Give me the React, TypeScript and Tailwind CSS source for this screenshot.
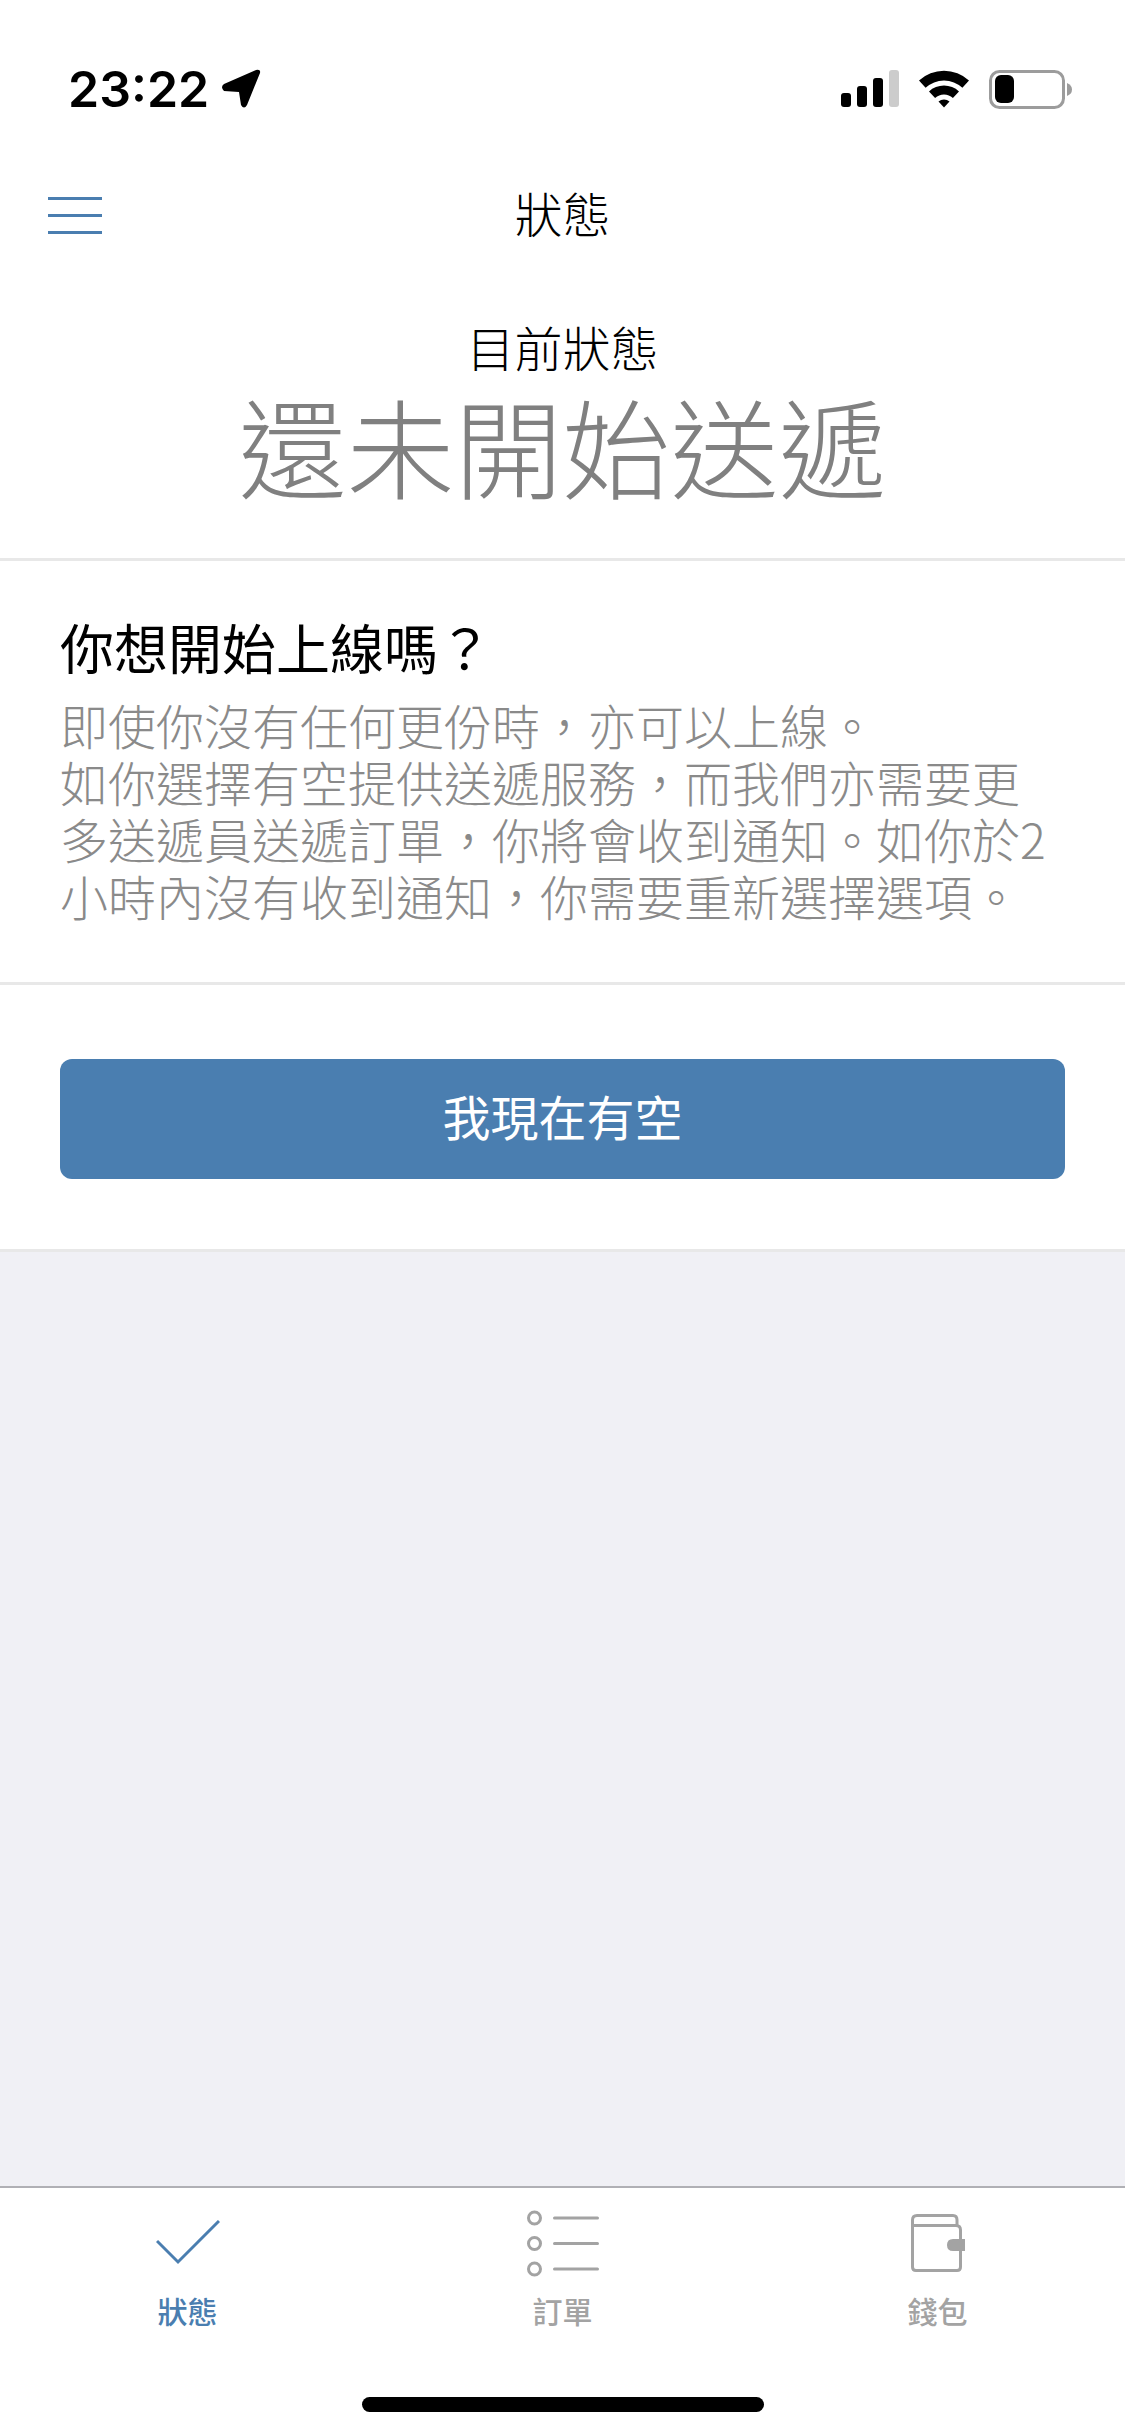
import React from "react"

const cjk = "font-['Noto_Sans_CJK_TC','Noto_Sans_CJK_SC',sans-serif]"

const StatusBar = () => (
  <div className="flex h-[150px] items-start justify-between pl-[68px] pr-[53px] pt-[58px]">
    <div className="flex items-center">
      <span className="font-['Inter',sans-serif] text-[50px] font-semibold leading-[62px] text-black">23:22</span>
      <svg width="40" height="40" viewBox="0 0 40 40" className="ml-[12px]">
        <path d="M3 15 L35 1 Q40 0 39 4 L26 36 Q23 41 20 36 L18 23 L3 22 Q-1 18 3 15 Z" fill="#000" />
      </svg>
    </div>
    <div className="mt-[12px] flex items-start gap-[20px]">
      <svg width="58" height="38" viewBox="0 0 58 38">
        <rect x="0" y="23" width="10" height="14" rx="3" fill="#000" />
        <rect x="16" y="16" width="10" height="21" rx="3" fill="#000" />
        <rect x="32" y="8" width="10" height="29" rx="3" fill="#000" />
        <rect x="48" y="0" width="10" height="37" rx="3" fill="#cccccc" />
      </svg>
      <svg width="50" height="38" viewBox="0 0 50 38">
        <path d="M0 10.5 A37 37 0 0 1 50 10.5 L43.4 17.8 A27 27 0 0 0 6.6 17.8 Z" fill="#000" />
        <path d="M10 21.4 A22 22 0 0 1 40 21.4 L33.9 28 A13 13 0 0 0 16.1 28 Z" fill="#000" />
        <path d="M19.5 31.6 A8 8 0 0 1 30.5 31.6 L25 37.5 Z" fill="#000" />
      </svg>
      <svg width="83" height="39" viewBox="0 0 83 39">
        <rect x="1.5" y="1.5" width="73" height="36" rx="9" fill="none" stroke="#9c9c9c" stroke-width="3" />
        <rect x="6" y="5" width="19" height="28" rx="6" fill="#000" />
        <path d="M78 13 Q83 15 83 19.5 Q83 24 78 26 Z" fill="#9c9c9c" />
      </svg>
    </div>
  </div>
)

const NavBar = () => (
  <div className="relative flex h-[130px] items-center justify-center">
    <button className="absolute left-[48px] top-[47px] flex w-[54px] flex-col gap-[14px]">
      <span className="h-[3px] w-full bg-[#4a7eb0]" />
      <span className="h-[3px] w-full bg-[#4a7eb0]" />
      <span className="h-[3px] w-full bg-[#4a7eb0]" />
    </button>
    <span className="-mt-[6px] text-[48px] font-light leading-[60px] text-black">狀態</span>
  </div>
)

const Tab = ({ icon, label, active }: { icon: React.ReactNode; label: string; active?: boolean }) => (
  <div className="flex flex-1 flex-col items-center">
    <div className="flex h-[96px] items-center justify-center">{icon}</div>
    <span className={`-mt-[1px] text-[30px] font-medium leading-[40px] ${active ? "text-[#4a7eb0]" : "text-[#a3a3a3]"}`}>{label}</span>
  </div>
)

export default function App() {
  return (
    <div className={`flex h-[2436px] w-[1125px] flex-col bg-[#f0f0f5] ${cjk}`}>
      <div className="bg-white">
        <StatusBar />
        <NavBar />
        <div className="flex h-[281px] flex-col items-center border-b-[3px] border-[#e8e8e8] pt-[36px]">
          <span className="text-[48px] font-light leading-[60px] text-black">目前狀態</span>
          <span className="mt-[8px] text-[108px] font-light leading-[120px] text-[#808080]">還未開始送遞</span>
        </div>
        <div className="h-[424px] border-b-[3px] border-[#e8e8e8] px-[60px] pt-[52px]">
          <h1 className="text-[54px] font-normal leading-[68px] text-black">你想開始上線嗎？</h1>
          <p className="mt-[15px] text-[48px] font-light leading-[57px] text-[#8a8a8a]">
            即使你沒有任何更份時，亦可以上線。
            <br />
            如你選擇有空提供送遞服務，而我們亦需要更多送遞員送遞訂單，你將會收到通知。如你於2小時內沒有收到通知，你需要重新選擇選項。
          </p>
        </div>
        <div className="border-b-[3px] border-[#e8e8e8] px-[60px] pb-[70px] pt-[74px]">
          <button className="flex h-[120px] w-full items-center justify-center rounded-[12px] bg-[#4a7eb0] pb-[9px] text-[48px] leading-[60px] text-white">
            我現在有空
          </button>
        </div>
      </div>
      <div className="flex-1" />
      <div className="relative h-[250px] border-t-[2px] border-[#b0b0b5] bg-white">
        <div className="flex pt-[7px]">
          <Tab
            active
            label="狀態"
            icon={
              <svg width="64" height="46" viewBox="0 0 64 46">
                <path d="M1 21 L22 42 L63 1" fill="none" stroke="#4a7eb0" stroke-width="3" />
              </svg>
            }
          />
          <Tab
            label="訂單"
            icon={
              <svg width="72" height="67" viewBox="0 0 72 67">
                <circle cx="7.5" cy="8" r="6" fill="none" stroke="#a3a3a3" stroke-width="3" />
                <circle cx="7.5" cy="33.5" r="6" fill="none" stroke="#a3a3a3" stroke-width="3" />
                <circle cx="7.5" cy="59" r="6" fill="none" stroke="#a3a3a3" stroke-width="3" />
                <path d="M27.5 8 H70.5 M27.5 33.5 H70.5 M27.5 59 H70.5" fill="none" stroke="#a3a3a3" stroke-width="3" stroke-linecap="round" />
              </svg>
            }
          />
          <Tab
            label="錢包"
            icon={
              <svg width="54" height="58" viewBox="0 0 54 58">
                <path d="M1.5 11 V6 Q1.5 1.5 6 1.5 H42 Q46 1.5 46 6 V11 M1.5 11 Q1.5 11.5 6 11.5 H45 Q49.5 11.5 49.5 16 V53 Q49.5 56.5 46 56.5 H5 Q1.5 56.5 1.5 53 Z" fill="none" stroke="#a3a3a3" stroke-width="3" />
                <path d="M54 25 H42 Q36 25 36 31 Q36 37 42 37 H54 Z" fill="#a3a3a3" />
              </svg>
            }
          />
        </div>
        <div className="absolute bottom-[24px] left-[362px] h-[15px] w-[402px] rounded-full bg-black" />
      </div>
    </div>
  )
}
